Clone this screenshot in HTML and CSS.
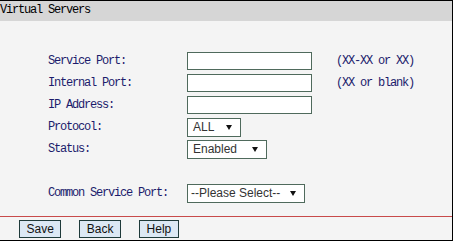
FILE: index.html
```html
<!DOCTYPE html>
<html>
<head>
<meta charset="utf-8">
<link rel="stylesheet" href="styles.css">
</head>
<body>
<div class="frame">
  <div class="title">Virtual Servers</div>
  <div class="content">
    <div class="form">
      <div class="row"><span class="label">Service Port:</span><span class="field"><span class="input"></span></span><span class="hint">(XX-XX or XX)</span></div>
      <div class="row"><span class="label">Internal Port:</span><span class="field"><span class="input"></span></span><span class="hint">(XX or blank)</span></div>
      <div class="row"><span class="label">IP Address:</span><span class="field"><span class="input"></span></span></div>
      <div class="row"><span class="label">Protocol:</span><span class="field"><span class="select w-proto"><span class="opt">ALL</span><span class="arrow"></span></span></span></div>
      <div class="row"><span class="label">Status:</span><span class="field"><span class="select w-status"><span class="opt">Enabled</span><span class="arrow"></span></span></span></div>
      <div class="row"></div>
      <div class="row"><span class="label">Common Service Port:</span><span class="field"><span class="select w-common"><span class="opt tight">--Please Select--</span><span class="arrow"></span></span></span></div>
    </div>
    <div class="rule"></div>
    <div class="buttons">
      <span class="btn">Save</span>
      <span class="btn">Back</span>
      <span class="btn">Help</span>
    </div>
  </div>
</div>
</body>
</html>
```
FILE: styles.css
```css
html, body {
  margin: 0;
  padding: 0;
  background: #ffffff;
}
.frame {
  width: 453px;
  height: 241px;
  box-sizing: border-box;
  border-top: 1px solid #000;
  border-right: 1px solid #000;
  border-bottom: 1px solid #000;
  display: flex;
  flex-direction: column;
  font-family: "Liberation Mono", monospace;
  font-size: 12px;
  letter-spacing: -1.2px;
}
.title {
  height: 20px;
  line-height: 18px;
  background: #d6d6d6;
  color: #000;
  padding-left: 0;
}
.content {
  flex: 1;
  background: #f4f4f4;
  display: flex;
  flex-direction: column;
}
.form {
  padding: 29px 0 0 48px;
  display: flex;
  flex-direction: column;
}
.row {
  height: 22px;
  display: flex;
  align-items: center;
}
.label {
  width: 139px;
  color: #1c1c6c;
}
.field {
  width: 149px;
  display: flex;
  align-items: center;
}
.hint {
  color: #1c1c6c;
}
.input {
  width: 125px;
  height: 18px;
  box-sizing: border-box;
  border: 1px solid #4f6a5c;
  background: #fff;
}
.select {
  height: 19px;
  box-sizing: border-box;
  border: 1px solid #4f6a5c;
  background: #fff;
  display: flex;
  align-items: center;
  justify-content: space-between;
  padding: 0 8px 0 5px;
  font-family: "Liberation Sans", Arial, sans-serif;
  font-size: 12px;
  letter-spacing: 0;
  color: #333;
}
.opt.tight {
  margin-left: -2px;
}
.w-proto { width: 54px; }
.w-status { width: 80px; }
.w-common { width: 118px; }
.arrow {
  width: 0;
  height: 0;
  border-left: 3px solid transparent;
  border-right: 3px solid transparent;
  border-top: 5px solid #111;
}
.rule {
  margin-top: 12px;
  height: 1px;
  background: #c84a4a;
}
.buttons {
  padding: 3px 0 0 19px;
  display: flex;
  gap: 18px;
}
.btn {
  height: 18px;
  box-sizing: border-box;
  border: 1px solid #1f3a3a;
  background: #dce8f4;
  padding: 0 6.5px;
  font-family: "Liberation Sans", Arial, sans-serif;
  font-size: 12px;
  letter-spacing: 0;
  line-height: 16px;
  color: #111;
}
```
